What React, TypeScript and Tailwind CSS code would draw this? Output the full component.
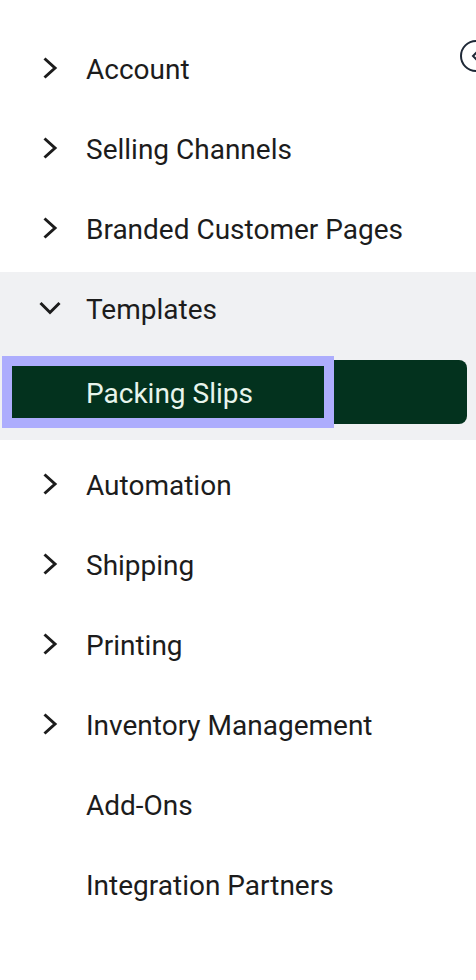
import React from "react";

type NavItem = {
  label: string;
  expandable: boolean;
};

const topItems: NavItem[] = [
  { label: "Account", expandable: true },
  { label: "Selling Channels", expandable: true },
  { label: "Branded Customer Pages", expandable: true },
];

const bottomItems: NavItem[] = [
  { label: "Automation", expandable: true },
  { label: "Shipping", expandable: true },
  { label: "Printing", expandable: true },
  { label: "Inventory Management", expandable: true },
  { label: "Add-Ons", expandable: false },
  { label: "Integration Partners", expandable: false },
];

function ChevronRight() {
  return (
    <svg width="28" height="28" viewBox="0 0 28 28" fill="none">
      <polyline
        points="8.5,4.5 19,14 8.5,23.5"
        stroke="#1c1c1c"
        strokeWidth="3"
        strokeLinejoin="miter"
      />
    </svg>
  );
}

function ChevronDown() {
  return (
    <svg width="28" height="28" viewBox="0 0 28 28" fill="none">
      <polyline
        points="4.5,9 14,18.5 23.5,9"
        stroke="#1c1c1c"
        strokeWidth="3"
        strokeLinejoin="miter"
      />
    </svg>
  );
}

function Row({ item }: { item: NavItem }) {
  return (
    <div className="flex h-[72px] my-1 items-center pl-9 cursor-pointer">
      <span className="w-7 h-7 flex items-center justify-center">
        {item.expandable && <ChevronRight />}
      </span>
      <span className="ml-[22px] mt-1 text-[28px] text-[#1c1c1c]">{item.label}</span>
    </div>
  );
}

export default function App() {
  return (
    <div
      className="relative w-[476px] h-[980px] overflow-hidden bg-white"
      style={{ fontFamily: "Roboto, 'Noto Sans', sans-serif" }}
    >
      {/* collapse toggle, sits on the sidebar edge */}
      <button className="absolute top-10 left-[460px] w-8 h-8 rounded-full border-2 border-[#1f2937] bg-white flex items-center justify-center">
        <svg width="16" height="16" viewBox="0 0 16 16" fill="none">
          <polyline points="10,3 5,8 10,13" stroke="#1f2937" strokeWidth="2" />
        </svg>
      </button>

      <nav className="pt-7 flex flex-col">
        {topItems.map((item) => (
          <Row key={item.label} item={item} />
        ))}

        {/* open group */}
        <div className="my-1 bg-[#f0f1f3] pb-4">
          <div className="flex h-[72px] items-center pl-9 cursor-pointer">
            <span className="w-7 h-7 flex items-center justify-center">
              <ChevronDown />
            </span>
            <span className="ml-[22px] mt-1 text-[28px] text-[#1c1c1c]">Templates</span>
          </div>
          <div className="mt-4 ml-2 w-[459px] h-16 rounded-lg bg-[#03321e] flex items-center">
            <a
              href="#"
              className="ml-1 w-[312px] h-[52px] flex items-center pl-[74px] pt-1 bg-[#03321e] outline-[10px] outline-solid outline-[#adadfd] text-[28px] text-[#e8f5ec]"
            >
              Packing Slips
            </a>
          </div>
        </div>

        {bottomItems.map((item) => (
          <Row key={item.label} item={item} />
        ))}
      </nav>
    </div>
  );
}
